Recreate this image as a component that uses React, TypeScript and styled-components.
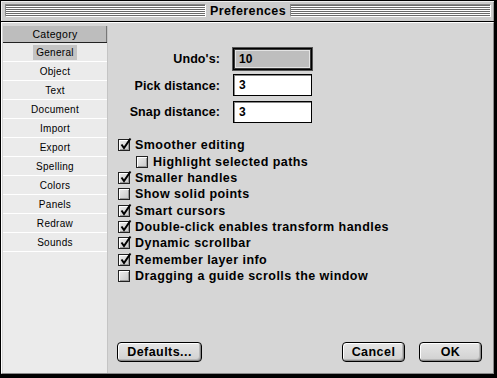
import React from 'react';
import styled, { createGlobalStyle } from 'styled-components';

const Global = createGlobalStyle`
  html, body { margin: 0; padding: 0; background: #fff; }
  body { font-family: "Liberation Sans", Arial, sans-serif; color: #000; }
  * { box-sizing: border-box; }
`;

const Window = styled.div`
  width: 497px;
  height: 378px;
  display: flex;
  flex-direction: column;
  background: #d6d6d6;
  border-top: 1px solid #000;
  border-left: 1px solid #000;
  border-right: 3px solid #000;
  border-bottom: 4px solid #000;
`;

const TitleBar = styled.div`
  height: 21px;
  flex: none;
  display: flex;
  align-items: center;
  padding: 0 3px 0 4px;
  background: #cccccc;
  border-bottom: 1px solid #000;
  box-shadow: inset 1px 1px 0 #eeeeee, inset -1px 0 0 #999;
`;

const Stripes = styled.div`
  flex: 1;
  height: 13px;
  margin-top: -1px;
  background: repeating-linear-gradient(to bottom, #6a6a6a 0 1px, #ffffff 1px 2px);
  border-right: 1px solid #fff;
  border-bottom: 1px solid #fff;
  border-top: 1px solid #888;
  border-left: 1px solid #888;
`;

const Title = styled.div`
  padding: 0 4px;
  font-weight: bold;
  font-size: 12.5px;
  line-height: 16px;
  letter-spacing: 0.4px;
`;

const Body = styled.div`
  flex: 1;
  display: flex;
  min-height: 0;
  border-top: 1px solid #fff;
  border-left: 1px solid #fff;
  border-right: 1px solid #8a8a8a;
  border-bottom: 1px solid #8a8a8a;
  padding: 3px 0 0 1px;
`;

const Sidebar = styled.div`
  width: 105px;
  flex: none;
  display: flex;
  flex-direction: column;
  background: #ebebeb;
  border-right: 1px solid #c4c4c4;
  font-size: 10px;
`;

const SidebarHeader = styled.div`
  height: 17px;
  display: flex;
  align-items: center;
  justify-content: center;
  background: #bdbdbd;
  border-bottom: 1px solid #222;
  box-shadow: inset -1px 0 0 #777;
  font-size: 10.5px;
  letter-spacing: 0.3px;
`;

const SidebarItem = styled.div`
  height: 19px;
  display: flex;
  align-items: center;
  justify-content: center;
  border-bottom: 1px solid #ffffff;
  font-size: 10px;
  letter-spacing: 0.3px;
  padding-top: 1px;
`;

const ItemLabel = styled.span<{ $selected?: boolean }>`
  padding: 1px 3px;
  line-height: 13px;
  background: ${p => (p.$selected ? '#c4c4c4' : 'transparent')};
`;

const Main = styled.div`
  flex: 1;
  display: flex;
  flex-direction: column;
  padding: 0 11px 11px 10px;
`;

const Form = styled.div`
  margin-top: 21px;
  display: grid;
  grid-template-columns: 102px 79px;
  column-gap: 13px;
  row-gap: 3.6px;
  align-items: center;
`;

const FieldLabel = styled.div`
  text-align: right;
  font-weight: bold;
  font-size: 12.5px;
  letter-spacing: 0.1px;
  line-height: 22px;
  padding-top: 1px;
`;

const Field = styled.div<{ $focused?: boolean }>`
  height: 22px;
  padding-left: 5px;
  display: flex;
  align-items: center;
  font-weight: bold;
  font-size: 12px;
  border: 1px solid #000;
  background: ${p => (p.$focused ? '#bebebe' : '#fff')};
  box-shadow: ${p =>
    p.$focused
      ? '0 0 0 1px #555, inset 0 0 0 1px #3a3a3a, inset 0 0 0 2px #e4e4e4'
      : 'inset 1px 1px 0 #888'};
`;

const Checks = styled.div`
  margin-top: 14px;
  display: flex;
  flex-direction: column;
`;

const CheckRow = styled.div<{ $indent?: boolean }>`
  height: 16.33px;
  display: flex;
  align-items: center;
  gap: 5px;
  padding-left: ${p => (p.$indent ? '18px' : '0')};
  font-weight: bold;
  font-size: 12.5px;
  letter-spacing: 0.45px;
  white-space: nowrap;
`;

const Box = styled.span`
  position: relative;
  width: 12px;
  height: 12px;
  flex: none;
  border: 1px solid #222;
  background: linear-gradient(135deg, #eeeeee, #c8c8c8);
  box-shadow: inset 1px 1px 0 #fff, inset -1px -1px 0 #999;
`;

const CheckMark = styled.svg`
  position: absolute;
  left: 0;
  top: -2px;
  width: 12px;
  height: 12px;
  overflow: visible;
`;

const Buttons = styled.div`
  margin-top: auto;
  display: flex;
  align-items: center;
  gap: 14px;
`;

const Spacer = styled.div`
  flex: 1;
`;

const Button = styled.button<{ $w: number }>`
  width: ${p => p.$w}px;
  height: 20px;
  padding: 0;
  border: 1px solid #000;
  border-radius: 4px;
  background: linear-gradient(to bottom, #e6e6e6, #d0d0d0);
  box-shadow: inset 1px 1px 0 #fff, inset -1px -1px 0 #888, inset -2px -2px 0 #b8b8b8;
  font-family: "Liberation Sans", Arial, sans-serif;
  font-weight: bold;
  font-size: 12.5px;
  letter-spacing: 0.45px;
  color: #000;
`;

const categories = ['General', 'Object', 'Text', 'Document', 'Import', 'Export', 'Spelling', 'Colors', 'Panels', 'Redraw', 'Sounds'];

const options: { label: string; checked: boolean; indent?: boolean }[] = [
  { label: 'Smoother editing', checked: true },
  { label: 'Highlight selected paths', checked: false, indent: true },
  { label: 'Smaller handles', checked: true },
  { label: 'Show solid points', checked: false },
  { label: 'Smart cursors', checked: true },
  { label: 'Double-click enables transform handles', checked: true },
  { label: 'Dynamic scrollbar', checked: true },
  { label: 'Remember layer info', checked: true },
  { label: 'Dragging a guide scrolls the window', checked: false },
];

const Checkbox = ({ checked }: { checked: boolean }) => (
  <Box>
    {checked && (
      <CheckMark viewBox="0 0 12 12">
        <path d="M2.5 6.5 L5 10 L11.5 0.5" fill="none" stroke="#000" strokeWidth="2" strokeLinejoin="miter" />
      </CheckMark>
    )}
  </Box>
);

export default function App() {
  return (
    <>
      <Global />
      <Window>
        <TitleBar>
          <Stripes />
          <Title>Preferences</Title>
          <Stripes />
        </TitleBar>
        <Body>
          <Sidebar>
            <SidebarHeader>Category</SidebarHeader>
            {categories.map((c, i) => (
              <SidebarItem key={c}>
                <ItemLabel $selected={i === 0}>{c}</ItemLabel>
              </SidebarItem>
            ))}
          </Sidebar>
          <Main>
            <Form>
              <FieldLabel>Undo's:</FieldLabel>
              <Field $focused>10</Field>
              <FieldLabel>Pick distance:</FieldLabel>
              <Field>3</Field>
              <FieldLabel>Snap distance:</FieldLabel>
              <Field>3</Field>
            </Form>
            <Checks>
              {options.map(o => (
                <CheckRow key={o.label} $indent={o.indent}>
                  <Checkbox checked={o.checked} />
                  {o.label}
                </CheckRow>
              ))}
            </Checks>
            <Buttons>
              <Button $w={85} style={{ marginLeft: -1 }}>Defaults...</Button>
              <Spacer />
              <Button $w={63}>Cancel</Button>
              <Button $w={63}>OK</Button>
            </Buttons>
          </Main>
        </Body>
      </Window>
    </>
  );
}
